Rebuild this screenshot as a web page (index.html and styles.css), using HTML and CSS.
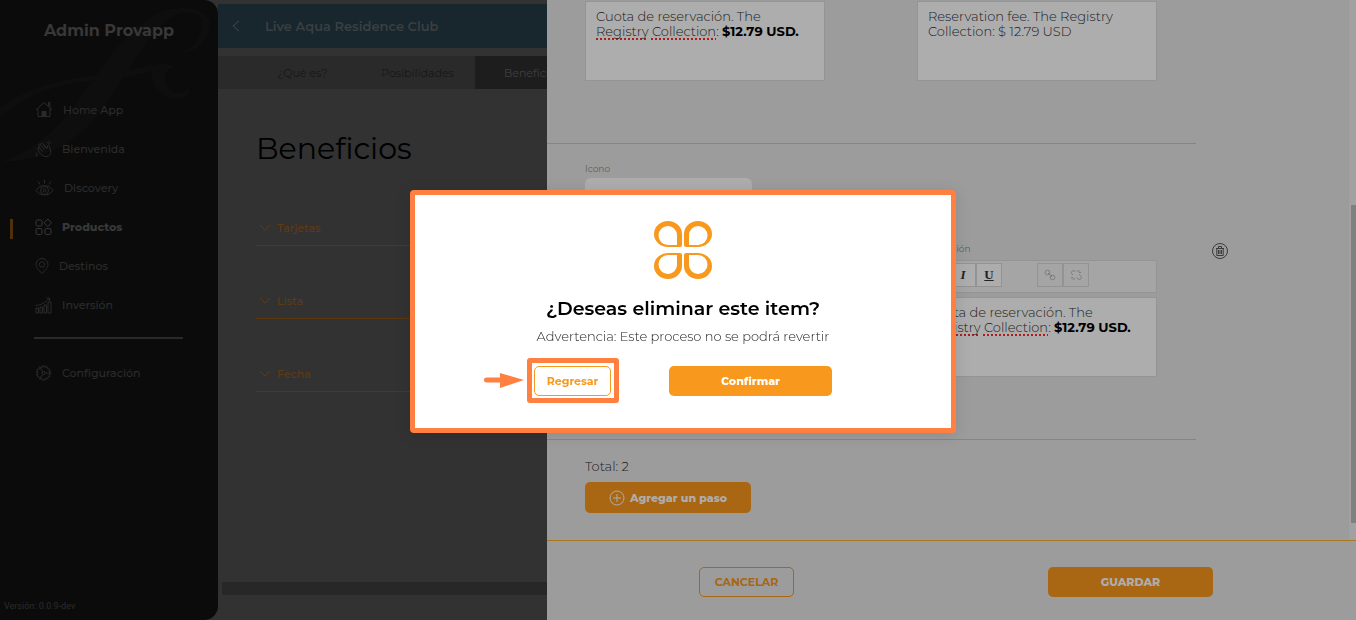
FILE: index.html
```html
<!DOCTYPE html>
<html lang="es">
<head>
    <meta charset="UTF-8">
    <meta name="viewport" content="width=device-width, initial-scale=1.0">
    <title>Admin Provapp</title>
    <link rel="stylesheet" href="styles.css">
</head>
<body>
    <div class="app">
        <aside class="sidebar">
            <svg class="swirl" width="218" height="170" viewBox="0 0 218 170" fill="#0e0e0e" aria-hidden="true">
                <path d="M0 108C25 88 60 80 88 76C115 74 140 66 160 64L172 65C150 72 120 80 85 82C50 86 20 98 0 118z"/>
                <path d="M0 162C45 160 75 145 100 112C130 72 150 25 180 13C198 9 208 20 200 35C195 46 186 52 178 54C196 54 210 38 210 24C208 8 180 4 160 12C125 28 100 70 75 105C50 138 25 154 0 162z"/>
                <path d="M152 68C150 88 165 104 184 98C190 94 190 90 188 87C186 94 170 96 166 84C162 76 168 66 174 68C170 62 156 62 152 68z"/>
            </svg>
            <h2 class="brand">Admin Provapp</h2>
            <nav class="menu">
                <a href="#" class="menu-item">
                    <svg width="18" height="18" viewBox="0 0 18 18"><path d="M1 9 9 1.5 17 9M3 8v7.5h12V8M13.5 5V1.5h1.5V7"/><path d="M7 15.5v-5h4v5z" fill="currentColor"/></svg>
                    Home App
                </a>
                <a href="#" class="menu-item">
                    <svg width="17" height="18" viewBox="0 0 17 18"><path d="M4 11.5 2.8 8.8c-.4-1.3 1-2 1.8-.8L3.6 5.2c0-1.2 1.3-1.6 1.9-.5l.4-1c.5-1 1.5-.8 2 0L12 8.500l.4-2.700c.6-1.400 2-.8 2 .5l1.300 5c.5 3.500-2 5.200-4.700 5.200-3.500 0-5.400-2-7-5zM4.600 8l3 3.700M5.500 4.700l4 4.800M8 3.700l3.300 4.600M12 2l2 2M13.500 1l2.500 2.500M1 12.500l2 3M.7 15l1 1.500"/></svg>
                    Bienvenida
                </a>
                <a href="#" class="menu-item">
                    <svg width="19" height="18" viewBox="0 0 19 18"><path d="M1 11.500C5 5 14 5 18 11.500 14 17.500 5 17.500 1 11.500z"/><circle cx="9.500" cy="11.500" r="4"/><circle cx="9.500" cy="11.500" r="1.500"/><path d="M9.500 1v3.500M3 2.500l2 3M16 2.500l-2 3"/></svg>
                    Discovery
                </a>
                <a href="#" class="menu-item active">
                    <svg width="17" height="18" viewBox="0 0 17 18"><rect x="1" y="2" width="6" height="6" rx="1.500"/><rect x="1" y="10.500" width="6" height="6" rx="1.500"/><rect x="10" y="10.500" width="6" height="6" rx="1.500"/><path d="M12.800 1 16.500 4.800 12.800 8.600 9 4.800z"/></svg>
                    Productos
                </a>
                <a href="#" class="menu-item">
                    <svg width="14" height="18" viewBox="0 0 14 18"><path d="M7 16.500C3 12.500 1 10 1 7.500a6 6 0 0 1 12 0c0 2.500-2 5-6 9z"/><circle cx="7" cy="7.500" r="2.700"/></svg>
                    Destinos
                </a>
                <a href="#" class="menu-item">
                    <svg width="17" height="18" viewBox="0 0 17 18"><path d="M1 17v-5h2.500v5zM5 17v-6h2.500v6zM9 17V9h2.500v8zM13 17V6h3v11zM.5 9.500C6 9 10 7 14 2.500M11.500 2h3v3"/></svg>
                    Inversión
                </a>
                <hr class="menu-divider">
                <a href="#" class="menu-item">
                    <svg width="17" height="18" viewBox="0 0 17 18"><circle cx="8.500" cy="9" r="6.300"/><circle cx="8.500" cy="9" r="7.300" stroke-dasharray="1.500 1.400"/><circle cx="8.500" cy="9" r="1.500"/><path d="M10 9h5M7.700 7.700 5 3.500M7.700 10.300 5 14.500"/></svg>
                    Configuración
                </a>
            </nav>
            <p class="version">Versión: 0.0.9-dev</p>
        </aside>

        <main class="main">
            <header class="topbar">
                <button class="back" aria-label="Volver"><svg width="8" height="12" viewBox="0 0 8 12"><path d="M7 1 1 6l6 5"/></svg></button>
                <span>Live Aqua Residence Club</span>
            </header>
            <nav class="tabs">
                <a href="#" class="tab">¿Qué es?</a>
                <a href="#" class="tab">Posibilidades</a>
                <a href="#" class="tab active">Beneficios</a>
            </nav>
            <section class="content">
                <h1>Beneficios</h1>
                <button class="accordion"><svg width="12" height="7" viewBox="0 0 12 7"><path d="M1 1l5 5 5-5"/></svg>Tarjetas</button>
                <button class="accordion"><svg width="12" height="7" viewBox="0 0 12 7"><path d="M1 1l5 5 5-5"/></svg>Lista</button>
                <button class="accordion"><svg width="12" height="7" viewBox="0 0 12 7"><path d="M1 1l5 5 5-5"/></svg>Fecha</button>
            </section>
            <div class="main-scroll"></div>
        </main>
    </div>

    <div class="drawer-wrap">
        <section class="drawer">
            <div class="drawer-body">
                <div class="steps">
                    <div class="step">
                        <div class="step-fields">
                            <div class="columns">
                                <div class="editor" contenteditable="true" spellcheck="false">Cuota de reservación. The <span class="typo">Registry</span> <span class="typo">Collection</span>: <b>$12.79 USD.</b></div>
                                <div class="editor" contenteditable="true" spellcheck="false">Reservation fee. The Registry Collection: $ 12.79 USD</div>
                            </div>
                        </div>
                    </div>

                    <div class="step">
                        <div class="step-fields">
                            <label class="label" for="icono">Icono</label>
                            <select id="icono" class="select">
                                <option>Billete</option>
                            </select>
                            <div class="columns description">
                                <div></div>
                                <div>
                                    <span class="label">Descripción</span>
                                    <div class="toolbar">
                                        <button class="tool bold">B</button>
                                        <button class="tool italic">I</button>
                                        <button class="tool underline">U</button>
                                        <button class="tool link" aria-label="Enlace" disabled><svg width="12" height="12" viewBox="0 0 12 12"><circle cx="3.500" cy="3.500" r="2.300"/><circle cx="8.500" cy="8.500" r="2.300"/><path d="M4 4l4 4"/></svg></button>
                                        <button class="tool" aria-label="Quitar enlace" disabled><svg width="12" height="12" viewBox="0 0 12 12"><path d="M5.500 3C4 .5.500 2 1.500 4.500L3 6M6.500 8.500 8 10c2.500 1.500 4.500-1.500 2.500-3.500L9 5.500M8 1v2M11 3.500H9M4 9v2M1 8.500h2M10 1.500l-1 1M2 10.500l1-1"/></svg></button>
                                    </div>
                                    <div class="editor" contenteditable="true" spellcheck="false">Cuota de reservación. The <span class="typo">Registry</span> <span class="typo">Collection</span>: <b>$12.79 USD.</b></div>
                                </div>
                            </div>
                        </div>
                        <button class="delete" aria-label="Eliminar">
                            <svg width="18" height="18" viewBox="0 0 18 18"><circle cx="9" cy="9" r="7.500"/><path d="M5 6.500h8M7.500 6.500v-2h3v2M5.800 6.500v7h6.400v-7M7.500 8v4M9 8v4M10.500 8v4"/></svg>
                        </button>
                    </div>

                    <div class="summary">
                        <p>Total: 2</p>
                        <button class="btn btn-dim add">
                            <svg width="16" height="16" viewBox="0 0 16 16"><circle cx="8" cy="8" r="7"/><path d="M8 4v8M4 8h8"/></svg>
                            Agregar un paso
                        </button>
                    </div>
                </div>
                <div class="scrollbar"><div class="thumb"></div></div>
            </div>
            <footer class="drawer-footer">
                <button class="btn btn-outline-dim">CANCELAR</button>
                <button class="btn btn-dim">GUARDAR</button>
            </footer>
        </section>
    </div>

    <div class="modal-wrap">
        <div class="modal" role="dialog" aria-modal="true" aria-labelledby="modal-title">
            <svg class="logo" width="60" height="60" viewBox="0 0 60 60" fill="#f8981d" fill-rule="evenodd" aria-hidden="true">
                <path id="petal" d="M15 1A14 13 0 0 1 29 14V25Q29 27 27 27H15A14 13 0 0 1 15 1zM15 6A9 9 0 0 0 15 25H24V15A9 9 0 0 0 15 6z"/>
                <use href="#petal" transform="matrix(-1 0 0 1 60 0)"/>
                <use href="#petal" transform="matrix(1 0 0 -1 0 60)"/>
                <use href="#petal" transform="matrix(-1 0 0 -1 60 60)"/>
            </svg>
            <h3 id="modal-title">¿Deseas eliminar este item?</h3>
            <p>Advertencia: Este proceso no se podrá revertir</p>
            <div class="modal-actions">
                <svg width="40" height="16" viewBox="0 0 40 16" aria-hidden="true"><path d="M2.500 7H17" stroke="#ff8040" stroke-width="5" stroke-linecap="round"/><path d="M16 0l24 7-24 8z" fill="#ff8040"/></svg>
                <div class="highlight"><button class="btn btn-outline">Regresar</button></div>
                <button class="btn btn-primary">Confirmar</button>
            </div>
        </div>
    </div>
</body>
</html>
```
FILE: styles.css
```css
* {
    box-sizing: border-box;
}

body {
    margin: 0;
    font-family: Montserrat, Inter, sans-serif;
    font-size: 13px;
    background: #323232;
    overflow: hidden;
}

h1, h2, h3, p {
    margin: 0;
}

a {
    text-decoration: none;
    color: inherit;
}

button {
    font-family: inherit;
    padding: 0;
    border: none;
    background: none;
    cursor: pointer;
}

svg {
    flex: none;
}

.app {
    display: flex;
    height: 100vh;
}

/* Sidebar */
.sidebar {
    position: relative;
    display: flex;
    flex-direction: column;
    width: 218px;
    background: #0b0b0b;
    border-radius: 0 14px 14px 0;
    color: #2b2b2b;
    overflow: hidden;
}

.swirl {
    position: absolute;
    top: 0;
    left: 0;
}

.brand {
    position: relative;
    padding-top: 21px;
    font-size: 16px;
    line-height: 20px;
    text-align: center;
    color: #383838;
}

.menu {
    position: relative;
    margin-top: 49px;
    font-size: 11px;
    font-weight: 500;
}

.menu-item {
    display: flex;
    align-items: center;
    gap: 10px;
    height: 39px;
    padding-left: 35px;
}

.menu-item svg {
    fill: none;
    stroke: currentColor;
}

.menu-item.active {
    position: relative;
    font-weight: 800;
    color: #383838;
}

.menu-item.active::before {
    content: "";
    position: absolute;
    bottom: 7px;
    left: 10px;
    width: 3px;
    height: 20px;
    background: #4f3008;
}

.menu-divider {
    height: 2px;
    margin: 13px 35px 14px 34px;
    border: none;
    background: #2a2a2a;
}

.version {
    margin-top: auto;
    padding: 0 4px 8px;
    font-family: Roboto, sans-serif;
    font-size: 9px;
    line-height: 12px;
}

/* Main page */
.main {
    flex: 1;
    display: flex;
    flex-direction: column;
    min-width: 0;
    padding-top: 4px;
}

.topbar {
    display: flex;
    align-items: center;
    gap: 25px;
    height: 44px;
    padding-left: 14px;
    background: #18262d;
    color: #3a3f42;
    font-size: 13px;
    font-weight: 600;
}

.back {
    display: flex;
}

.back svg {
    fill: none;
    stroke: #46494b;
}

.tabs {
    display: flex;
    height: 33px;
    margin-top: 8px;
    padding-left: 27px;
    background: #2a2a2a;
    color: #171717;
    font-size: 11px;
}

.tab {
    display: flex;
    align-items: center;
    justify-content: center;
    width: 115px;
}

.tab.active {
    background: #1d1d1d;
    color: #3f3f3f;
}

.content {
    flex: 1;
    padding: 41px 38px 0;
}

.content h1 {
    margin-bottom: 30px;
    font-size: 30px;
    font-weight: 400;
    line-height: 38px;
    color: #000000;
}

.accordion {
    display: flex;
    align-items: flex-end;
    gap: 6px;
    width: 100%;
    height: 48px;
    margin-bottom: 25px;
    padding: 0 0 10px 3px;
    border-bottom: 1px solid #5a360a;
    color: #5f3a14;
    font-size: 11px;
    font-weight: 500;
    line-height: 14px;
}

.accordion svg {
    margin-bottom: 4px;
    fill: none;
    stroke: #5f3a14;
}

.main-scroll {
    height: 13px;
    margin: 0 4px 25px;
    background: #272727;
}

/* Drawer */
.drawer-wrap {
    position: fixed;
    inset: 0;
    padding-left: 547px;
}

.drawer {
    display: flex;
    flex-direction: column;
    height: 100%;
    background: #9c9c9c;
    color: #1c1c1c;
}

.drawer-body {
    flex: 1;
    display: flex;
    min-height: 0;
    overflow: hidden;
}

.steps {
    flex: 1;
    padding-top: 1px;
}

.step {
    display: flex;
    align-items: center;
}

.step-fields {
    flex: 1;
    padding: 0 38px 62px;
    border-bottom: 1px solid #858585;
}

.step + .step .step-fields {
    padding-top: 17px;
}

.columns {
    display: grid;
    grid-template-columns: 240px 240px;
    gap: 92px;
}

.editor {
    height: 80px;
    padding: 7px 10px;
    border: 1px solid #949494;
    background: #adadad;
    font-size: 13px;
    font-weight: 300;
    line-height: 15px;
}

.editor b {
    font-weight: 700;
    color: #000000;
}

.typo {
    text-decoration: underline dotted #b01c1c 2px;
    text-decoration-skip-ink: none;
    text-underline-offset: 2px;
}

.label {
    display: block;
    font-size: 9px;
    line-height: 16px;
    color: #5e5e5e;
}

.select {
    display: block;
    width: 167px;
    height: 30px;
    margin-top: 1px;
    padding: 0 12px;
    border: none;
    border-radius: 6px;
    background: #adadad;
    color: #000000;
    appearance: none;
    font-family: inherit;
    font-size: 12px;
}

.description {
    margin-top: 33px;
}

.toolbar {
    display: flex;
    align-items: center;
    height: 33px;
    margin: 3px 0 4px;
    padding: 0 6px 3px;
    border: 1px solid #949494;
    background: #a5a5a5;
}

.tool {
    display: flex;
    align-items: center;
    justify-content: center;
    width: 26px;
    height: 24px;
    border: 1px solid #939393;
    background: #adadad;
    font-family: "Liberation Serif", serif;
    font-size: 13px;
    font-weight: 700;
    color: #222222;
}

.tool.italic {
    font-style: italic;
}

.tool.underline {
    text-decoration: underline;
}

.tool.link {
    margin-left: 35px;
}

.tool:disabled {
    background: #a5a5a5;
}

.tool svg {
    fill: none;
    stroke: #7d7d7d;
}

.delete {
    display: flex;
    width: 18px;
    height: 18px;
    margin: 0 120px 82px 15px;
}

.step > .step-fields:only-child {
    margin-right: 153px;
}

.delete svg {
    fill: none;
    stroke: #3a3a3a;
}

.summary {
    padding: 18px 38px;
}

.summary p {
    font-weight: 300;
    line-height: 16px;
}

.scrollbar {
    width: 7px;
    padding: 205px 0 17px 2px;
    background: #a1a1a1;
}

.thumb {
    height: 100%;
    background: #808080;
}

.drawer-footer {
    display: flex;
    justify-content: space-between;
    height: 80px;
    padding: 26px 143px 0 152px;
    border-top: 1px solid #a8771e;
}

/* Buttons */
.btn {
    display: flex;
    align-items: center;
    justify-content: center;
    height: 30px;
    border-radius: 5px;
    font-size: 11px;
    font-weight: 800;
}

.btn-dim {
    width: 165px;
    background: #a96613;
    color: #adadad;
}

.btn-outline-dim {
    width: 95px;
    border: 1px solid #a96613;
    color: #a96613;
    font-weight: 700;
}

.btn-outline {
    width: 77px;
    border: 1px solid #f8981d;
    color: #f8981d;
    font-weight: 700;
}

.btn-primary {
    width: 163px;
    margin-left: 50px;
    background: #f8981d;
    color: #ffffff;
}

.add {
    gap: 5px;
    width: 166px;
    height: 31px;
    margin-top: 8px;
}

.add svg {
    fill: none;
    stroke: currentColor;
}

/* Modal */
.modal-wrap {
    position: fixed;
    inset: 0;
    display: flex;
    align-items: center;
    justify-content: center;
    padding: 3px 0 0 10px;
}

.modal {
    display: flex;
    flex-direction: column;
    align-items: center;
    width: 546px;
    padding: 25px 0;
    border: 5px solid #ff8040;
    border-radius: 4px;
    background: #ffffff;
    box-shadow: 0 2px 16px rgba(0, 0, 0, 0.1);
}

.modal h3 {
    margin-top: 16px;
    font-size: 19px;
    font-weight: 600;
    line-height: 26px;
    color: #000000;
}

.modal p {
    margin-top: 6px;
    font-weight: 300;
    line-height: 16px;
    color: #222222;
}

.modal-actions {
    display: flex;
    align-items: center;
    align-self: flex-start;
    margin: 14px 0 0 69px;
}

.highlight {
    margin-left: 3px;
    padding: 3px 3px 2px 2px;
    border: 5px solid #ff8040;
    border-radius: 3px;
}
```
